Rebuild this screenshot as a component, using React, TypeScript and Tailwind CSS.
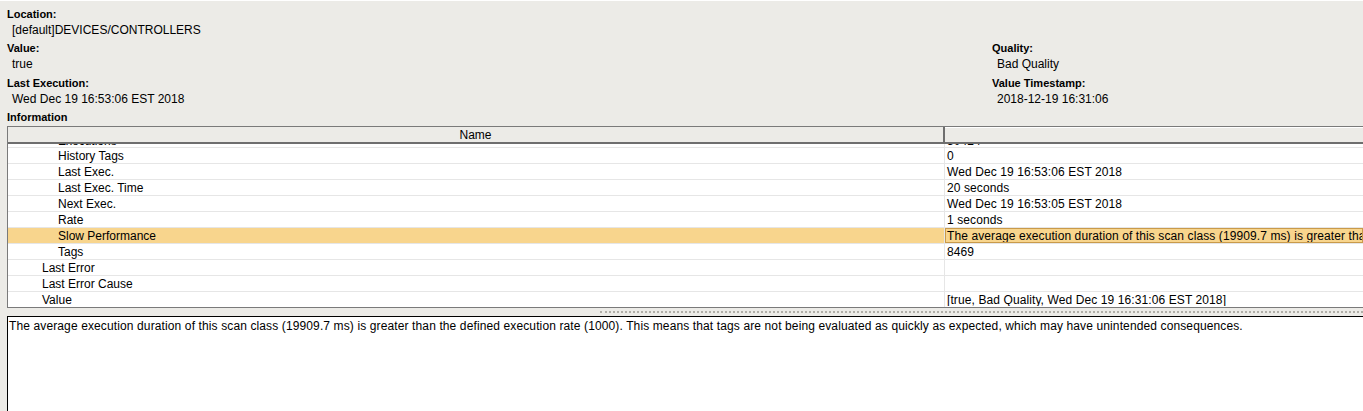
import React from "react";

type Row = { name: string; value: string; level: 1 | 2; selected?: boolean; partial?: boolean };

const LONG_MSG =
  "The average execution duration of this scan class (19909.7 ms) is greater than the defined execution rate (1000). This means that tags are not being evaluated as quickly as expected, which may have unintended consequences.";

const rows: Row[] = [
  { name: "Executions", value: "30424", level: 2, partial: true },
  { name: "History Tags", value: "0", level: 2 },
  { name: "Last Exec.", value: "Wed Dec 19 16:53:06 EST 2018", level: 2 },
  { name: "Last Exec. Time", value: "20 seconds", level: 2 },
  { name: "Next Exec.", value: "Wed Dec 19 16:53:05 EST 2018", level: 2 },
  { name: "Rate", value: "1 seconds", level: 2 },
  { name: "Slow Performance", value: LONG_MSG, level: 2, selected: true },
  { name: "Tags", value: "8469", level: 2 },
  { name: "Last Error", value: "", level: 1 },
  { name: "Last Error Cause", value: "", level: 1 },
  { name: "Value", value: "[true, Bad Quality, Wed Dec 19 16:31:06 EST 2018]", level: 1 },
];

function Field({ label, value }: { label: string; value: string }) {
  return (
    <div>
      <div className="h-4 leading-4 text-[11px] font-bold">{label}</div>
      <div className="h-4 leading-4 pl-[5px]">{value}</div>
    </div>
  );
}

function TableRow({ row }: { row: Row }) {
  return (
    <div className={`flex h-4 border-b border-[#e6e6e6] ${row.selected ? "bg-[#f8d58d]" : "bg-white"}`}>
      <div
        className={`w-[937px] shrink-0 border-r border-[#e6e6e6] ${row.partial ? "leading-[18px]" : "leading-[16px]"} ${
          row.level === 2 ? "pl-[50px]" : "pl-[34px]"
        }`}
      >
        {row.name}
      </div>
      <div
        className={`flex-1 min-w-0 whitespace-nowrap overflow-hidden pl-px tracking-[0.1px] ${
          row.partial ? "leading-[16px]" : "leading-[14px]"
        } ${row.selected ? "border border-[#c99a4a]" : "border border-transparent"}`}
      >
        {row.value}
      </div>
    </div>
  );
}

export default function App() {
  return (
    <div
      className="w-[1363px] h-[411px] overflow-hidden bg-[#ecebe7] text-[12px] text-black border-t border-white"
      style={{ fontFamily: '"Liberation Sans", Arial, sans-serif' }}
    >
      {/* properties header */}
      <div className="pl-[7px] pt-[5px]">
        <Field label="Location:" value="[default]DEVICES/CONTROLLERS" />
        <div className="grid grid-cols-[985px_1fr] mt-[2px]">
          <Field label="Value:" value="true" />
          <Field label="Quality:" value="Bad Quality" />
        </div>
        <div className="grid grid-cols-[985px_1fr] mt-[3px]">
          <Field label="Last Execution:" value="Wed Dec 19 16:53:06 EST 2018" />
          <Field label="Value Timestamp:" value="2018-12-19 16:31:06" />
        </div>
        <div className="h-4 leading-4 text-[11px] font-bold mt-[2px]">Information</div>
      </div>

      {/* info table */}
      <div className="ml-[7px] mt-px border-t border-l border-b border-[#7a7a7a] bg-white overflow-hidden">
        <div className="flex h-[17px] bg-[#ecebe7] border-b-2 border-[#6e6e6e]">
          <div className="w-[937px] shrink-0 text-center leading-[17px] border-r-2 border-[#6e6e6e]">Name</div>
          <div className="flex-1 border-t border-white" />
        </div>
        <div className="h-[163px] overflow-hidden">
          <div className="-mt-[12px]">
            {rows.map((r) => (
              <TableRow key={r.name} row={r} />
            ))}
          </div>
        </div>
      </div>

      {/* splitter */}
      <div className="h-[8px] flex items-center">
        <div className="ml-[600px] flex-1 border-t-2 border-dotted border-[#b0aea8]" />
      </div>

      {/* details text area */}
      <div className="ml-[7px] h-[200px] bg-white border-t border-l border-black pl-[1px] pt-[1px] leading-[16px] whitespace-nowrap tracking-[0.12px]">
        {LONG_MSG}
      </div>
    </div>
  );
}
